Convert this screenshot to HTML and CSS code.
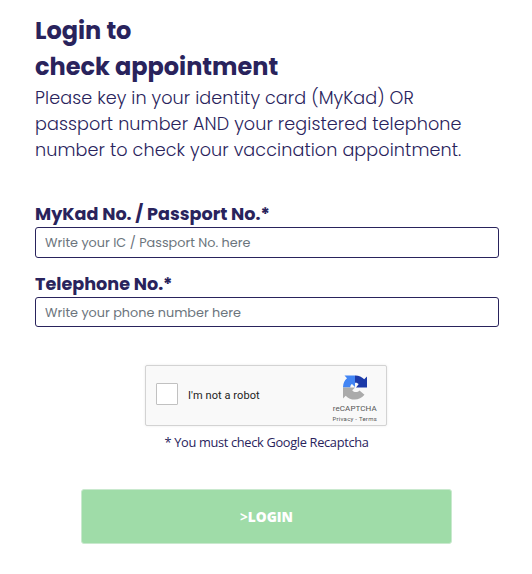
FILE: index.html
```
<!DOCTYPE html>
<html lang="en">
<head>
    <meta charset="UTF-8">
    <meta name="viewport" content="width=device-width, initial-scale=1.0">
    <title>Check Appointment</title>
    <link rel="stylesheet" href="styles.css">
</head>
<body>
    <div class="container">
        <h1>Login to<br>check appointment</h1>
        <p class="intro">Please key in your identity card (MyKad) OR<br>passport number AND your registered telephone<br>number to check your vaccination appointment.</p>

        <form>
            <div class="input-section">
                <label for="icNumber">MyKad No. / Passport No.*</label>
                <input type="text" id="icNumber" placeholder="Write your IC / Passport No. here">
            </div>
            <div class="input-section">
                <label for="phone">Telephone No.*</label>
                <input type="text" id="phone" placeholder="Write your phone number here">
            </div>

            <!-- Captcha -->
            <div class="captcha">
                <span class="captcha-box"></span>
                <span class="captcha-text">I'm not a robot</span>
                <div class="captcha-brand">
                    <svg class="captcha-logo" viewBox="0 0 24 25" width="24" height="25">
                        <path fill="#1c3aa9" d="M24 12.5V1.500l-2.800 2.800A12 12 0 0 0 12 .5v7.300c1.400-.3 2.800.2 3.600 1.400L13 12.500z"/>
                        <path fill="#4285f4" d="M12 .5H1.500l2.500 2.800A12 12 0 0 0 0 12.500h7.300c0-1.800.6-2.800 1.700-3.500L12 12z"/>
                        <path fill="#ababab" d="M0 12.500v10.900l2.700-2.700c5.100 5.600 14.300 5 18.800-.9l-5-4.300c-2 2.200-5.600 2.100-7.300-.3l3-2.700z"/>
                    </svg>
                    <span class="captcha-name">reCAPTCHA</span>
                    <span class="captcha-links">Privacy - Terms</span>
                </div>
            </div>
            <p class="captcha-note">* You must check Google Recaptcha</p>

            <button type="button" id="loginBtn"><span>&gt;</span>LOGIN</button>
        </form>
    </div>
</body>
</html>
```

FILE: styles.css
```
body {
    margin: 0;
    background: #fff;
    color: #29235c;
    font-family: Poppins, Inter, sans-serif;
}
.container {
    padding: 13px 33px 0 35px;
}
h1 {
    margin: 0;
    font-size: 24px;
    font-weight: 700;
    line-height: 36px;
    white-space: nowrap;
}
.intro {
    margin: 0 0 38px;
    font-size: 17.6px;
    font-weight: 300;
    line-height: 26px;
    letter-spacing: 0.09px;
    white-space: nowrap;
}
.input-section {
    margin-bottom: 13px;
}
label {
    display: block;
    font-size: 17.6px;
    font-weight: 700;
    line-height: 26px;
}
input {
    display: block;
    box-sizing: border-box;
    width: 100%;
    height: 31px;
    padding: 0 9px;
    border: 1px solid #29235c;
    border-radius: 3px;
    font-family: inherit;
    font-size: 12.8px;
}
#phone {
    height: 30px;
    padding-top: 1px;
}
input::placeholder {
    color: #6c757d;
    opacity: 1;
}
.captcha {
    display: flex;
    align-items: center;
    box-sizing: border-box;
    width: 242px;
    height: 61px;
    margin: 38px 0 0 110px;
    padding: 0 9px 0 10px;
    border: 1px solid #d3d3d3;
    border-radius: 2px;
    background: #f9f9f9;
    box-shadow: 0 0 3px rgba(0, 0, 0, 0.08);
    color: #222;
    font-family: Roboto, sans-serif;
}
.captcha-box {
    box-sizing: border-box;
    width: 22px;
    height: 22px;
    margin-top: -3px;
    border: 1px solid #c1c1c1;
    border-radius: 1px;
    background: #fff;
}
.captcha-text {
    margin-left: 10px;
    font-size: 11px;
    letter-spacing: 0.08px;
}
.captcha-brand {
    display: flex;
    flex-direction: column;
    align-items: center;
    margin-left: auto;
    margin-top: 6px;
    color: #555;
}
.captcha-name {
    margin-top: 4px;
    font-size: 8px;
    line-height: 10px;
    letter-spacing: 0.1px;
}
.captcha-links {
    font-size: 6px;
    line-height: 9px;
    letter-spacing: 0.25px;
}
.captcha-note {
    margin: 6px 0 0;
    font-family: "Open Sans", "Noto Sans", sans-serif;
    font-size: 12.8px;
    line-height: 20px;
    letter-spacing: -0.32px;
    text-align: center;
    text-indent: -1px;
}
#loginBtn {
    display: block;
    box-sizing: border-box;
    width: 371px;
    height: 55px;
    margin: 37px 0 0 46px;
    border: 1px solid #c9e9ce;
    border-radius: 3px;
    background: #9fdca8;
    color: #fff;
    font-family: "Open Sans", "Noto Sans", sans-serif;
    font-size: 13.7px;
    font-weight: 800;
}
#loginBtn span {
    font-weight: 700;
}
```
